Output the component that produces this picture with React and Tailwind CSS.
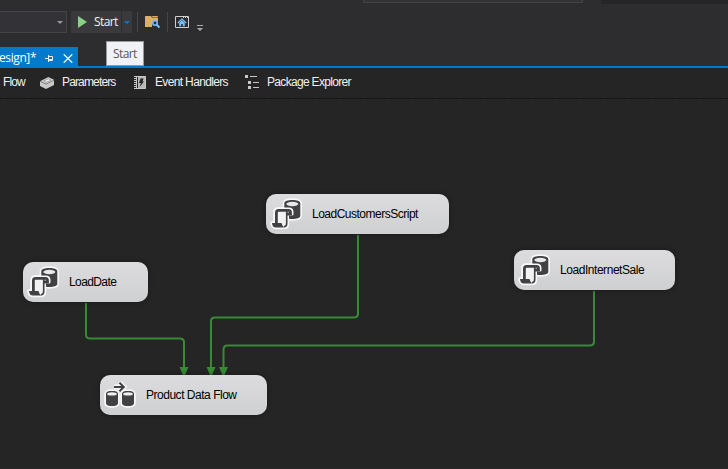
import React from "react";

const uiFont = "font-['Open_Sans','Noto_Sans',sans-serif]";
const dialogFont = "font-['Liberation_Sans',sans-serif]";

function Caret({ className }) {
  return (
    <svg className={className} width="6" height="3" viewBox="0 0 6 3">
      <path d="M0 0H6L3 3Z" fill="currentColor" />
    </svg>
  );
}

function FolderSearchIcon() {
  return (
    <svg width="16" height="14" viewBox="0 0 16 14">
      <path d="M0 12V1.500Q0 1 .5 1H6L7 2.500H13V6H10Q7 6 7 9V12Z" fill="#dcb067" />
      <path d="M7 1H12.500L13 2H7.500Z" fill="#dcb067" />
      <circle cx="10" cy="8" r="2.200" fill="#2d2d30" stroke="#75beff" strokeWidth="1.600" />
      <path d="M11.500 9.500L14.500 12.500" stroke="#75beff" strokeWidth="2" />
    </svg>
  );
}

function HomeWindowIcon() {
  return (
    <svg width="14" height="12" viewBox="0 0 14 12">
      <path d="M.5 .5H13.500V11.500H.5Z" fill="none" stroke="#d0d0d0" />
      <path d="M8 1.500H13" stroke="#d0d0d0" strokeDasharray="1 1" />
      <path d="M2.800 7L7 3L11.200 7" fill="none" stroke="#75beff" strokeWidth="1.200" />
      <path d="M4.200 6.800L7 4.300L9.800 6.800V10.300H7.800V8H6.200V10.300H4.200Z" fill="#75beff" />
    </svg>
  );
}

function BoxIcon() {
  return (
    <svg className="mt-px" width="14" height="12" viewBox="0 0 14 12">
      <path d="M0 4.200L8.300 0L14 2.800V8L6 12L0 9Z" fill="#c9c9c9" />
      <path d="M0 4.200L6 7.200L14 3.200" fill="none" stroke="#555" strokeWidth=".6" />
      <path d="M4 3.900L8.300 1.800L11 3.200L6.600 5.300Z" fill="#eeeeee" stroke="#888" strokeWidth=".6" />
    </svg>
  );
}

function EventIcon() {
  return (
    <svg width="12" height="13" viewBox="0 0 12 13">
      <path d="M3 .5H11.500V12.500H3" fill="#b8b8b8" stroke="#c8c8c8" />
      <path d="M1 0V13" stroke="#c8c8c8" strokeWidth="2" strokeDasharray="1 1" />
      <path d="M2.500 0V13" stroke="#c8c8c8" />
      <path d="M3.500 1V12" stroke="#252526" />
      <path d="M6.500 2.500H9.500L8.500 5.500H10L5.500 11L6.800 7H5Z" fill="#252526" />
    </svg>
  );
}

function TreeIcon() {
  return (
    <svg width="14" height="14" viewBox="0 0 14 14">
      <path d="M0 0H3V3H0ZM3 6H6V9H3ZM3 11H6V14H3Z" fill="#c8c8c8" />
      <path d="M5 1.500H12M8 7.500H14M8 12.500H14" stroke="#c8c8c8" />
    </svg>
  );
}

function ScriptIcon() {
  const cylinder = "M14.300 5.500C14.300 2.800 18 2 22.300 2S30.300 2.800 30.300 5.500V17.500C30.300 20.200 26.600 21 22.300 21S14.300 20.200 14.300 17.500Z";
  const scroll = "M5 25V14Q5 11 8 11H19Q22 11 22 14V16H17.500V26Q17.500 29.500 14 29.500H6Q2.300 29.500 2 25Z";
  return (
    <svg width="32" height="32" viewBox="0 0 32 32">
      <g fill="#f7f7f7" stroke="#f7f7f7" strokeWidth="3.400" strokeLinejoin="round">
        <path d={cylinder} />
        <path d={scroll} />
      </g>
      <path d={cylinder} fill="#414144" />
      <ellipse cx="22.300" cy="6" rx="6" ry="2.200" fill="#e9e9eb" />
      <path d={scroll} fill="#f2f2f3" stroke="#f7f7f7" strokeWidth="3" strokeLinejoin="round" />
      <path d="M6.400 25V14.500Q6.400 12.400 8.500 12.400H18.500Q20.500 12.400 20.500 14.500V16H17" fill="none" stroke="#414144" strokeWidth="2.800" />
      <path d="M16.700 13V25.500Q16.700 28.700 14 28.700" fill="none" stroke="#414144" strokeWidth="1.600" />
      <path d="M2 25H11.500Q12 28 14.500 29.500H6Q2.300 29.500 2 25Z" fill="#414144" />
    </svg>
  );
}

function DataFlowIcon() {
  const left = "M2 15C2 12.500 4.500 12 8 12S14 12.500 14 15V24C14 26.500 11 27 8 27S2 26.500 2 24Z";
  const arrow = "M10 8H19.500M15.500 3.800L19.800 8L15.500 12.200";
  return (
    <svg width="32" height="32" viewBox="0 0 32 32">
      <g fill="#f7f7f7" stroke="#f7f7f7" strokeWidth="3.400">
        <path d={left} />
        <path d={left} transform="translate(16 0)" />
        <path d={arrow} strokeWidth="5" />
      </g>
      <g fill="#414144">
        <path d={left} />
        <path d={left} transform="translate(16 0)" />
      </g>
      <ellipse cx="8" cy="14.900" rx="4.800" ry="1.600" fill="#f0f0f0" />
      <ellipse cx="24" cy="14.900" rx="4.800" ry="1.600" fill="#f0f0f0" />
      <path d={arrow} fill="none" stroke="#414144" strokeWidth="2" />
    </svg>
  );
}

function Node({ place, icon, children, text }) {
  return (
    <div className={`absolute flex h-10 items-center rounded-[10px] bg-linear-to-b from-[#dcdcdf] to-[#cfd0d2] pl-1 shadow-[0_0_4px_1px_rgba(0,0,0,0.25)] ${place}`}>
      {icon}
      <span className={`ml-2.5 whitespace-nowrap text-xs text-black ${text}`}>{children}</span>
    </div>
  );
}

export default function App() {
  return (
    <div className={`flex h-[469px] w-[728px] flex-col overflow-hidden bg-[#2d2d30] ${dialogFont}`}>
      <header className="relative flex h-[66px] shrink-0 flex-col justify-between">
        <div className="absolute left-[363px] top-0 h-[3px] w-[220px] border border-t-0 border-[#434346] bg-[#333337]" />
        <div className="absolute right-0 top-0 h-1 w-[127px] bg-[#252526]" />
        <div className={`flex h-[22px] items-center mt-[11px] ${uiFont}`}>
          <div className="flex h-[22px] w-[67px] items-center justify-end border border-l-0 border-[#434346] bg-[#333337] pr-[3px] text-[#999]">
            <Caret />
          </div>
          <button className="ml-1 flex h-[22px] w-[61px] items-center bg-[#3a3a3d] text-xs text-[#f1f1f1]">
            <svg className="ml-[7px]" width="9" height="14" viewBox="0 0 9 14">
              <path d="M0 1L9 7L0 13Z" fill="#8ad085" />
            </svg>
            <span className="ml-[7px] w-[27px] whitespace-nowrap text-left tracking-[-0.6px]">Start</span>
            <span className="flex h-full w-[11px] items-center justify-center border-l border-[#2d2d30] text-[#007acc]">
              <Caret className="shrink-0" />
            </span>
          </button>
          <i className="ml-[5px] h-5 w-px bg-[#46464a]" />
          <span className="ml-[7px]"><FolderSearchIcon /></span>
          <i className="ml-[6px] h-5 w-px bg-[#46464a]" />
          <span className="ml-[7px]"><HomeWindowIcon /></span>
          <svg className="ml-2 mt-3" width="6" height="6" viewBox="0 0 6 6">
            <path d="M0 0H6V1H0ZM0 3H6L3 6Z" fill="#aaa" />
          </svg>
        </div>
        <div className={`flex h-[19px] w-[78px] items-center bg-[#007acc] text-xs text-white ${uiFont}`}>
          <span className="ml-[-1px] w-[36px] whitespace-nowrap pt-0.5 tracking-[-0.4px]">esign]*</span>
          <svg className="ml-[10px] mt-1" width="8" height="8" viewBox="0 0 8 8">
            <path d="M0 3.500H3M3.500 0V7M3.500 1.500H7.500V5.500H3.500M3.500 4.500H7.500" fill="none" stroke="#e0effa" />
          </svg>
          <svg className="ml-[10px] mt-1" width="10" height="9" viewBox="0 0 10 9">
            <path d="M.7 .3L9.300 8.700M9.300 .3L.7 8.700" stroke="#e5f2fb" strokeWidth="1.400" />
          </svg>
        </div>
        <div className={`absolute left-[106px] top-[41px] z-10 flex h-[25px] w-[38px] items-center border border-[#999] bg-[#f1f2f7] pl-[6px] text-xs tracking-[-0.6px] text-[#575757] ${uiFont}`}>
          Start
        </div>
      </header>
      <nav className="flex h-8 shrink-0 items-center border-t-2 border-[#007acc] bg-[#252526] pb-0.5 text-xs text-[#f1f1f1]">
        <span className="ml-[3px] w-[37px] tracking-[-0.9px]">Flow</span>
        <BoxIcon />
        <span className="ml-2 w-[72px] tracking-[-0.85px]">Parameters</span>
        <EventIcon />
        <span className="ml-[9px] w-[90px] whitespace-nowrap tracking-[-0.65px]">Event Handlers</span>
        <TreeIcon />
        <span className="ml-2 whitespace-nowrap tracking-[-0.68px]">Package Explorer</span>
      </nav>
      <div className="h-px shrink-0 bg-[repeating-linear-gradient(90deg,#111_0px,#111_2px,#252526_2px,#252526_3px)]" />
      <main className="relative h-[370px] border-b border-[#30272b] bg-[#252526]">
        <svg className="absolute left-0 top-0" width="728" height="369" viewBox="0 99 728 369">
          <g fill="none" stroke="#388a34" strokeWidth="2">
            <path d="M86 303V334.500Q86 338.500 90 338.500H180Q184 338.500 184 342.500V368" />
            <path d="M358 235V313.500Q358 317.500 354 317.500H215Q211 317.500 211 321.500V368" />
            <path d="M594 291V341.500Q594 345.500 590 345.500H227.500Q223.500 345.500 223.500 349.500V368" />
          </g>
          <path d="M179.500 367H188.500L185 375H183ZM206.500 367H215.500L212 375H210ZM219 367H228L224.500 375H222.500Z" fill="#388a34" />
        </svg>
        <Node place="left-[266px] top-[95px] w-[183px]" icon={<ScriptIcon />} text="tracking-[-0.5px]">LoadCustomersScript</Node>
        <Node place="left-[23px] top-[163px] w-[125px]" icon={<ScriptIcon />} text="tracking-[-0.6px]">LoadDate</Node>
        <Node place="left-[514px] top-[151px] w-[161px]" icon={<ScriptIcon />} text="tracking-[-0.45px]">LoadInternetSale</Node>
        <Node place="left-[100px] top-[276px] w-[167px]" icon={<DataFlowIcon />} text="tracking-[-0.48px]">Product Data Flow</Node>
      </main>
    </div>
  );
}
